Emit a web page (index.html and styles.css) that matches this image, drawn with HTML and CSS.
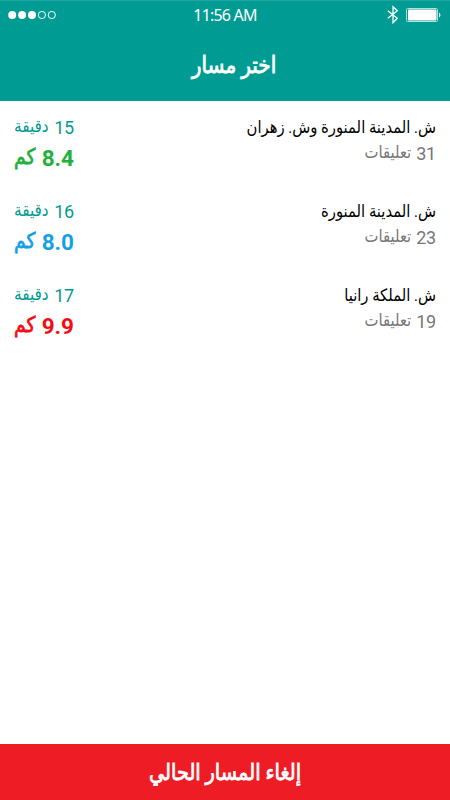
FILE: index.html
```html
<!DOCTYPE html>
<html lang="ar" dir="rtl">
<head>
<meta charset="utf-8">
<title>اختر مسار</title>
<link rel="stylesheet" href="styles.css">
</head>
<body>
<header class="header">
  <div class="status" dir="ltr">
    <svg class="signal" width="50" height="10" viewBox="0 0 50 10"><g fill="#fff"><circle cx="4.2" cy="5" r="4"/><circle cx="14.1" cy="5" r="4"/><circle cx="24" cy="5" r="4"/></g><g fill="none" stroke="#fff"><circle cx="33.9" cy="5" r="3.6"/><circle cx="43.8" cy="5" r="3.6"/></g></svg>
    <span class="clock">11:56 AM</span>
    <div class="indicators">
      <svg width="12" height="20" viewBox="0 0 12 20"><path d="M.8 5.7L10.3 13.2L6 17.7V1.8L10.3 5.8L.8 13.3" fill="none" stroke="#fff" stroke-width="1.3"/></svg>
      <svg width="36" height="16" viewBox="0 0 36 16"><rect x=".5" y="1.5" width="31" height="13" rx="1" fill="none" stroke="#b5dfdd"/><rect x="2" y="2.5" width="28.5" height="11" rx="1" fill="#fff"/><path d="M33 5.5Q36 8 33 10.5Z" fill="#fff"/></svg>
    </div>
  </div>
  <h1 class="title"><span>اختر مسار</span></h1>
</header>
<main class="routes">
  <article class="route green"><div class="info"><h2>ش. المدينة المنورة وش. زهران</h2><p><b>31</b><span>تعليقات</span></p></div><div class="metrics"><p class="time"><b>15</b><span>دقيقة</span></p><p class="distance"><b>8.4</b><span>كم</span></p></div></article>
  <article class="route blue"><div class="info"><h2>ش. المدينة المنورة</h2><p><b>23</b><span>تعليقات</span></p></div><div class="metrics"><p class="time"><b>16</b><span>دقيقة</span></p><p class="distance"><b>8.0</b><span>كم</span></p></div></article>
  <article class="route red"><div class="info"><h2>ش. الملكة رانيا</h2><p><b>19</b><span>تعليقات</span></p></div><div class="metrics"><p class="time"><b>17</b><span>دقيقة</span></p><p class="distance"><b>9.9</b><span>كم</span></p></div></article>
</main>
<button class="cancel"><span>إلغاء المسار الحالي</span></button>
</body>
</html>
```
FILE: styles.css
```css
* { box-sizing: border-box; }
body { margin: 0; height: 800px; display: flex; flex-direction: column; background: #fff; font-family: "Roboto", "DejaVu Sans", sans-serif; }
h1, h2, p { margin: 0; font-weight: 400; white-space: nowrap; }
.header { height: 101px; background: #009b93; color: #fff; border-top: 1px solid #1fa59e; }
.status { height: 29px; padding: 0 8px 1px; display: grid; grid-template-columns: 1fr auto 1fr; align-items: center; }
.clock { font-family: "Noto Sans", sans-serif; font-size: 16px; line-height: 20px; letter-spacing: -.8px; }
.indicators { display: flex; justify-content: flex-end; align-items: center; gap: 7px; }
.title { height: 70px; display: flex; align-items: center; justify-content: center; padding-left: 18px; font-size: 20.1px; -webkit-text-stroke: .7px currentColor; }
.title span, .cancel span, .info h2, .info span, .metrics span { display: inline-block; transform: scaleY(1.15); }
.routes { flex: 1; padding: 13px 14px 0; }
.route { height: 84.2px; display: flex; justify-content: space-between; }
.info h2 { height: 26px; line-height: 26px; font-size: 14.8px; color: #000; }
.info p { display: flex; gap: 5px; height: 27px; line-height: 28px; font-size: 14.8px; color: #777; }
.info p span, .time span { height: 25px; line-height: 25px; }
.route b { font-family: Roboto, sans-serif; font-size: 18px; font-weight: 400; letter-spacing: -.2px; }
.metrics { width: 60px; }
.metrics p { display: flex; justify-content: space-between; }
.time { height: 28px; line-height: 28px; font-size: 15.3px; color: #009b93; }
.distance { height: 32px; line-height: 32px; font-size: 18.8px; }
.distance span { height: 31px; line-height: 31px; -webkit-text-stroke: .7px currentColor; }
.route .distance b { font-size: 22.5px; font-weight: 700; letter-spacing: 0; }
.green .distance { color: #22b03b; }
.blue .distance { color: #159fe5; }
.red .distance { color: #f60b13; }
.cancel { height: 56px; border: 0; background: #ee1c25; color: #fff; font: 400 19.4px "Roboto", "DejaVu Sans", sans-serif; -webkit-text-stroke: .7px currentColor; }
```
